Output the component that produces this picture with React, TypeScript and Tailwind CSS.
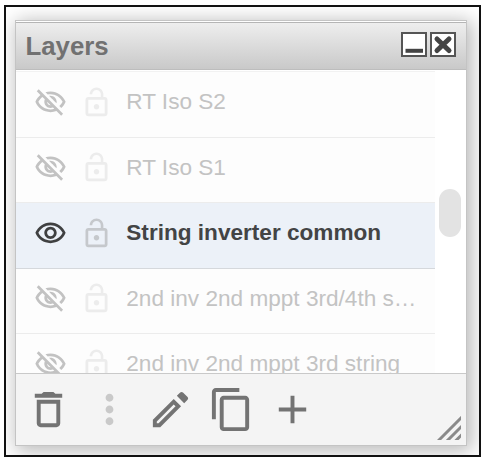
import { clsx } from "clsx";

type Layer = { name: string; visible: boolean };

const layers: Layer[] = [
  { name: "RT Iso S2", visible: false },
  { name: "RT Iso S1", visible: false },
  { name: "String inverter common", visible: true },
  { name: "2nd inv 2nd mppt 3rd/4th string", visible: false },
  { name: "2nd inv 2nd mppt 3rd string", visible: false },
];

const icons = {
  eye: "M12 6c3.79 0 7.17 2.13 8.82 5.5C19.17 14.87 15.79 17 12 17s-7.17-2.13-8.82-5.5C4.83 8.13 8.21 6 12 6m0-2C7 4 2.73 7.11 1 11.5 2.73 15.89 7 19 12 19s9.27-3.11 11-7.5C21.27 7.11 17 4 12 4zm0 5c1.38 0 2.5 1.12 2.5 2.5S13.38 14 12 14s-2.5-1.12-2.5-2.5S10.62 9 12 9m0-2c-2.48 0-4.5 2.02-4.5 4.5S9.52 16 12 16s4.5-2.02 4.5-4.5S14.48 7 12 7z",
  eyeOff:
    "M12 6c3.79 0 7.17 2.13 8.82 5.5-.59 1.22-1.42 2.27-2.41 3.12l1.41 1.41c1.39-1.23 2.49-2.77 3.18-4.53C21.27 7.11 17 4 12 4c-1.27 0-2.49.2-3.64.57l1.65 1.65C10.66 6.09 11.32 6 12 6zm-1.07 1.14L13 9.21c.57.25 1.03.71 1.28 1.28l2.07 2.07c.08-.34.14-.7.14-1.07C16.5 9.01 14.48 7 12 7c-.37 0-.72.05-1.07.14zM2.01 3.87l2.68 2.68C3.06 7.83 1.77 9.53 1 11.5 2.73 15.89 7 19 12 19c1.52 0 2.98-.29 4.32-.82l3.42 3.42 1.41-1.41L3.42 2.45 2.01 3.87zm7.5 7.5l2.61 2.61c-.04.01-.08.02-.12.02-1.38 0-2.5-1.12-2.5-2.5 0-.05.01-.08.01-.13zm-3.4-3.4l1.75 1.75c-.23.55-.36 1.15-.36 1.78 0 2.48 2.02 4.5 4.5 4.5.63 0 1.23-.13 1.77-.36l.98.98c-.88.24-1.8.38-2.75.38-3.79 0-7.17-2.13-8.82-5.5.7-1.43 1.72-2.61 2.93-3.53z",
  lock: "M12 17c1.1 0 2-.9 2-2s-.9-2-2-2-2 .9-2 2 .9 2 2 2zm6-9h-1V6c0-2.76-2.24-5-5-5S7 3.24 7 6h1.9c0-1.71 1.39-3.1 3.1-3.1 1.71 0 3.1 1.39 3.1 3.1v2H6c-1.1 0-2 .9-2 2v10c0 1.1.9 2 2 2h12c1.1 0 2-.9 2-2V10c0-1.1-.9-2-2-2zm0 12H6V10h12v10z",
  trash:
    "M6 19c0 1.1.9 2 2 2h8c1.1 0 2-.9 2-2V7H6v12zM8 9h8v10H8V9zm7.5-5l-1-1h-5l-1 1H5v2h14V4z",
  dots: "M12 8c1.1 0 2-.9 2-2s-.9-2-2-2-2 .9-2 2 .9 2 2 2zm0 2c-1.1 0-2 .9-2 2s.9 2 2 2 2-.9 2-2-.9-2-2-2zm0 6c-1.1 0-2 .9-2 2s.9 2 2 2 2-.9 2-2-.9-2-2-2z",
  edit: "M3 17.25V21h3.75L17.4 10.35l-3.75-3.75L3 17.25zM5.92 19H5v-.92l8.65-8.65.92.92L5.92 19zM20.71 5.63l-2.34-2.34c-.2-.2-.45-.29-.71-.29s-.51.1-.7.29l-1.73 1.73 3.75 3.75 1.73-1.73c.39-.39.39-1.02 0-1.41z",
  copy: "M16 1H4c-1.1 0-2 .9-2 2v14h2V3h12V1zm3 4H8c-1.1 0-2 .9-2 2v14c0 1.1.9 2 2 2h11c1.1 0 2-.9 2-2V7c0-1.1-.9-2-2-2zm0 16H8V7h11v14z",
  add: "M19 13h-6v6h-2v-6H5v-2h6V5h2v6h6v2z",
};

function Icon({ name, className }: { name: keyof typeof icons; className?: string }) {
  return (
    <svg viewBox="0 0 24 24" fill="currentColor" className={clsx("shrink-0", className)}>
      <path d={icons[name]} />
    </svg>
  );
}

function LayerRow({ layer }: { layer: Layer }) {
  return (
    <div
      className={clsx(
        "flex h-[65.5px] shrink-0 items-center border-b pb-[4px] pl-[17.5px] pr-[18px]",
        layer.visible ? "border-[#d5d8dc] bg-[#ecf1f8]" : "border-[#ececec] bg-[#fdfdfd]"
      )}
    >
      <Icon
        name={layer.visible ? "eye" : "eyeOff"}
        className={clsx("size-[33px]", layer.visible ? "text-[#3f4041]" : "text-[#c2c2c2]")}
      />
      <Icon
        name="lock"
        className={clsx("ml-[13.4px] size-[33px]", layer.visible ? "text-[#c5c8cc]" : "text-[#ececec]")}
      />
      <span
        className={clsx(
          "ml-[13.4px] truncate text-[22.6px]",
          layer.visible ? "font-bold text-[#434445]" : "text-[#c3c3c3]"
        )}
      >
        {layer.name}
      </span>
    </div>
  );
}

export default function App() {
  return (
    <div className="h-[462px] w-[488px] bg-white pl-1 pt-[5px] font-['Liberation_Sans',Arial,sans-serif]">
      <div className="h-[452px] w-[477px] overflow-hidden border-2 border-[#111] bg-white pl-[9px] pt-[13px]">
        {/* Window */}
        <div className="flex h-[426px] w-[452px] flex-col border border-[#c4c4c4] bg-white shadow-[3px_3px_18px_2px_rgba(0,0,0,0.28)]">
          <div className="mt-px flex h-[48px] shrink-0 items-center justify-between border-b border-t border-b-[#bdbdbd] border-t-[#b5b5b5] bg-linear-to-b from-[#eeeeee] to-[#c9c9c9] pl-[9.5px] pr-[10px]">
            <h1 className="pt-px text-[25.8px] font-bold text-[#717171]">Layers</h1>
            <div className="flex gap-[3px] pb-[3px]">
              <svg viewBox="0 0 26 25" className="h-[25px] w-[26px]">
                <rect x="1" y="1" width="24" height="23" fill="#fff" stroke="#555" strokeWidth="2" />
                <path d="M4.5 18.8h17.5" stroke="#444" strokeWidth="4" />
              </svg>
              <svg viewBox="0 0 26 25" className="h-[25px] w-[26px]">
                <rect x="1" y="1" width="24" height="23" fill="#fff" stroke="#555" strokeWidth="2" />
                <path d="M7 7l12 11.5M19 7L7 18.5" stroke="#444" strokeWidth="5" strokeLinecap="round" />
              </svg>
            </div>
          </div>

          {/* Layer list */}
          <div className="flex h-[303px] shrink-0 overflow-hidden">
            <div className="flex w-[419px] flex-col pt-[1px]">
              <div className="h-px shrink-0 bg-[#f2f2f2]" />
              {layers.map((layer) => (
                <LayerRow key={layer.name} layer={layer} />
              ))}
            </div>
            <div className="flex-1 pl-[3.5px] pt-[119px]">
              <div className="h-[48px] w-[22px] rounded-full bg-[#e3e3e3]" />
            </div>
          </div>

          {/* Toolbar */}
          <div className="relative flex flex-1 items-center gap-[14px] border-t border-[#c9c9c9] bg-[#f4f4f4] pl-[9px] text-[#737373]">
            <Icon name="trash" className="size-[47px]" />
            <Icon name="dots" className="size-[47px] text-[#c9c9c9]" />
            <Icon name="edit" className="size-[47px]" />
            <Icon name="copy" className="size-[47px]" />
            <Icon name="add" className="size-[47px]" />
            {/* Resize handle */}
            <svg viewBox="0 0 24 24" className="absolute bottom-[5px] right-[5px] size-6" stroke="#8a8a8a" strokeWidth="3">
              <path d="M0 26L26 0M9 26L26 9M17.5 26L26 17.5" />
            </svg>
          </div>
        </div>
      </div>
    </div>
  );
}
